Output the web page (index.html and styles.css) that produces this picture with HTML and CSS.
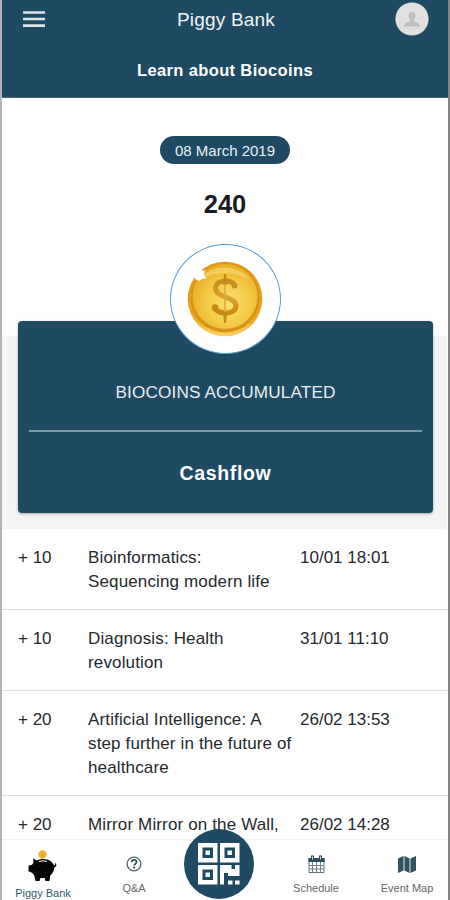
FILE: index.html
```html
<!DOCTYPE html>
<html lang="en">
<head>
<meta charset="utf-8">
<title>Piggy Bank</title>
<link rel="stylesheet" href="styles.css">
</head>
<body>
<div class="screen">
  <header class="header">
    <div class="bar">
      <svg class="menu" viewBox="0 0 22 17"><path d="M0 1.500h22M0 8h22M0 14.600h22" stroke="#dce6e9" stroke-width="2.700"/></svg>
      <h1 class="title">Piggy Bank</h1>
      <svg class="avatar" viewBox="0 0 34 34"><circle cx="17" cy="17" r="16.600" fill="#e0e0df"/><path d="M17 10c-2.600 0-3.800 1.700-3.500 4 .2 1.600.8 2.500 1.700 3.400v1.700c-1.200 1.300-5.500 1.300-6.200 4.400v1h16v-1c-.7-3.100-5-3.100-6.200-4.400v-1.700c.9-.9 1.500-1.800 1.700-3.400.3-2.300-.9-4-3.500-4z" fill="#bfc1c1"/></svg>
    </div>
    <div class="learn">Learn about Biocoins</div>
  </header>
  <main class="content">
    <section class="balance">
      <div class="date">08 March 2019</div>
      <div class="amount">240</div>
      <div class="coin">
        <svg viewBox="0 0 76 76">
          <defs>
            <radialGradient id="face" cx=".55" cy=".6" r=".6"><stop offset="0" stop-color="#f9e070"/><stop offset=".55" stop-color="#f3cb48"/><stop offset="1" stop-color="#e8ae25"/></radialGradient>
            <linearGradient id="rim" x1="0" y1="0" x2="0" y2="1"><stop offset="0" stop-color="#dc9716"/><stop offset=".75" stop-color="#eba61b"/><stop offset="1" stop-color="#fbd467"/></linearGradient>
            <linearGradient id="sign" x1="0" y1="0" x2="0" y2="1"><stop offset="0" stop-color="#c58e20"/><stop offset=".5" stop-color="#d9a52e"/><stop offset="1" stop-color="#c98a12"/></linearGradient>
          </defs>
          <circle cx="38" cy="38" r="37.300" fill="url(#rim)"/>
          <circle cx="38" cy="37" r="34.500" fill="#da9215"/>
          <circle cx="38" cy="35.500" r="32.500" fill="url(#face)"/>
          <path d="M12 19C23 4 49 1 63 19C49 10 27 10 12 19Z" fill="#fae487" opacity=".5"/>
          <path d="M48 24.500C44 18.500 29 18 28.500 27C28 37 49 35 49 45C48.500 54 32 54 27 46.500" fill="none" stroke="url(#sign)" stroke-width="5"/>
          <path d="M37 13h2l.8 8v3h-3.600v-3zM36.200 50h3.600v4L39 62h-2l-.8-8z" fill="#c48b1b"/>
          <path d="M38 23v28" stroke="#dca833" stroke-width="1.500"/>
          <circle cx="47.500" cy="24.500" r="2.900" fill="#c79025"/><circle cx="28" cy="46.500" r="3.200" fill="#c98a12"/>
          <path d="M8 12l6 2 4-6-1 7 3 2-5 1-3 2-4-2z" fill="#fff"/>
          <circle cx="13" cy="12" r="3.600" fill="#fff"/>
        </svg>
      </div>
    </section>
    <section class="band">
      <div class="card">
        <div class="caption">BIOCOINS ACCUMULATED</div>
        <div class="cashflow">Cashflow</div>
      </div>
    </section>
    <ul class="list">
      <li><span>+ 10</span><span class="desc">Bioinformatics:<br>Sequencing modern life</span><span>10/01 18:01</span></li>
      <li><span>+ 10</span><span class="desc">Diagnosis: Health<br>revolution</span><span>31/01 11:10</span></li>
      <li><span>+ 20</span><span class="desc">Artificial Intelligence: A<br>step further in the future of<br>healthcare</span><span>26/02 13:53</span></li>
      <li><span>+ 20</span><span class="desc">Mirror Mirror on the Wall,</span><span>26/02 14:28</span></li>
    </ul>
  </main>
  <nav class="tabs">
    <a class="tab active">
      <svg class="pig" viewBox="0 0 30 34"><circle cx="14.500" cy="4.500" r="4.200" fill="#f2b32f"/><path d="M13.500 2.500h2v4h-2z" fill="#e5a128"/><path d="M5 8.500l4 2.100c4-2.200 10-2 14 .8 1.500 1.100 2.500 2.500 3 4.200 1-.1 1.500-1.400.8-2.700 2 .6 2.300 3.800-.5 4.400-.1 3.600-1.600 6.300-4.100 8.200L21.500 31h-4l-.8-3h-4.200l-1 3h-4L6.300 25.500 4 22.800.5 21.300v-5.500L4 14.700l1.500-2z" fill="#050505"/><path d="M11 11.500q4-1.200 8-.1" fill="none" stroke="#f7f7f7"/></svg>
      <span>Piggy Bank</span>
    </a>
    <a class="tab">
      <svg class="help" viewBox="0 0 16 16"><circle cx="8" cy="8" r="6.900" fill="none" stroke="#49636c" stroke-width="1.300"/><path d="M5.700 6.200c0-3.100 4.800-3 4.800-.1 0 1.900-2.400 1.800-2.400 3.500M8.100 10.800v1.800" fill="none" stroke="#304f5b" stroke-width="1.800"/></svg>
      <span>Q&amp;A</span>
    </a>
    <a class="scan">
      <svg viewBox="0 0 42 42"><path d="M0 0h19.500v19.500H0zM22 0h19.500v19.500H22zM0 22h19.500v19.500H0z" fill="#fff"/><path d="M4.500 4.500H15V15H4.500zM26.500 4.500H37V15H26.500zM4.500 26.500H15V37H4.500z" fill="#1e4b63"/><path d="M7.500 7.500h4.500v4.500H7.500zM29.500 7.500h4.500v4.500h-4.500zM7.500 29.500h4.500v4.500H7.500z" fill="#fff"/><path d="M22 22h11.500v4H37v-4h4.500v11H30v-3h-4v11.500h-4zM30 37.500h4.500v4H30zM37 37.500h4.500v4H37z" fill="#fff"/></svg>
    </a>
    <a class="tab">
      <svg class="cal" viewBox="0 0 17 18"><path d="M1 3.500h15v14H1z" fill="#fff" stroke="#5d747b"/><path d="M.5 3h16v4H.5z" fill="#294d59"/><path d="M4.500 7v10M8.500 7v10M12.500 7v10M1 10.500h15M1 14h15" stroke="#708389"/><path d="M4.500.5v4M12.500.5v4" stroke="#294d59" stroke-width="3"/><path d="M4.500 1.500v3M12.500 1.500v3" stroke="#d5dfe2"/></svg>
      <span>Schedule</span>
    </a>
    <a class="tab">
      <svg class="map" viewBox="0 0 18 17"><path d="M0 2.500L5.500 0v14.500L0 17zM6.500 0l5 2.500V17l-5-2.500zM12.500 2.500L18 0v14.500L12.500 17z" fill="#31545f"/><path d="M6 0v14.500M12 2.500V17" stroke="#81959b"/></svg>
      <span>Event Map</span>
    </a>
  </nav>
</div>
</body>
</html>
```
FILE: styles.css
```css
* { box-sizing: border-box; }
body { margin: 0; font-family: "Liberation Sans", Arial, sans-serif; color: #24292c; background: #fff; }
.screen { width: 450px; height: 900px; border-left: 2px solid #b4b4b4; border-right: 2px solid #858585; display: flex; flex-direction: column; overflow: hidden; }
svg { display: block; }
.header { height: 98px; flex: none; background: #1e4b63; border-bottom: 1px solid #456a7e; color: #fff; }
.bar { height: 38px; display: grid; grid-template-columns: 60px 1fr 60px; align-items: center; padding: 0 19px 0 21px; }
.menu { width: 22px; height: 17px; }
.title { margin: 1px 0 0; font-size: 19px; font-weight: 400; letter-spacing: .2px; text-align: center; color: #eef3f6; }
.avatar { width: 34px; height: 34px; justify-self: end; }
.learn { margin-top: 22px; line-height: 20px; font-size: 16.5px; font-weight: 700; letter-spacing: .36px; text-align: center; }
.content { flex: 1; min-height: 0; overflow: hidden; }
.balance { height: 238px; padding-top: 38px; display: flex; flex-direction: column; align-items: center; }
.date { flex: none; width: 130px; height: 28px; line-height: 29px; border-radius: 14px; background: #1e4b63; color: #e8eff3; font-size: 15px; text-align: center; white-space: nowrap; }
.amount { flex: none; margin-top: 25px; line-height: 30px; font-size: 25.5px; font-weight: 700; color: #171c20; }
.coin { flex: none; position: relative; z-index: 1; width: 111px; height: 110px; margin-top: 25px; border: 1px solid #579bd5; border-radius: 50%; background: #fff; display: grid; place-items: center; }
.coin svg { width: 76px; height: 76px; }
.band { height: 193px; margin-right: 1px; padding: 0 14px 0 16px; background: #f4f4f4; display: flow-root; }
.card { height: 192px; margin-top: -15px; padding: 0 11px; border-radius: 4px; background: #1e4b63; box-shadow: 0 1px 3px rgba(0, 0, 0, .3); color: #fff; text-align: center; }
.caption { height: 111px; padding-top: 60px; line-height: 22px; border-bottom: 2px solid #7899aa; font-size: 17.2px; letter-spacing: .14px; color: #e6edf1; }
.cashflow { padding-top: 29px; line-height: 24px; font-size: 19.5px; font-weight: 700; letter-spacing: .65px; }
.list { margin: 0; padding: 0; list-style: none; }
.list li { display: grid; grid-template-columns: 70px 212px 1fr; padding: 17px 0 15.4px 16px; border-bottom: 1px solid #dcdfe0; font-size: 17px; line-height: 23.8px; white-space: nowrap; }
.desc { letter-spacing: .14px; }
.tabs { position: relative; height: 61px; flex: none; display: grid; grid-template-columns: 82px 100px 70px 124px 58px; background: #fff; border-top: 1px solid #f0f2f2; }
.tab { display: flex; flex-direction: column; align-items: center; font-size: 11px; line-height: 14px; color: #62696c; white-space: nowrap; }
.active { color: #315b70; }
.pig { width: 30px; height: 34px; margin-top: 10px; }
.active span { margin-top: 2px; }
.help { width: 16px; height: 16px; margin-top: 16px; }
.cal { width: 17px; height: 18px; margin-top: 15px; }
.map { width: 18px; height: 17px; margin-top: 16px; }
.help + span { margin-top: 9px; }
.cal + span, .map + span { margin-top: 8px; }
.scan { width: 70px; height: 70px; margin-top: -11px; border-radius: 50%; background: #1e4b63; display: grid; place-items: center; }
.scan svg { width: 42px; height: 42px; }
```
